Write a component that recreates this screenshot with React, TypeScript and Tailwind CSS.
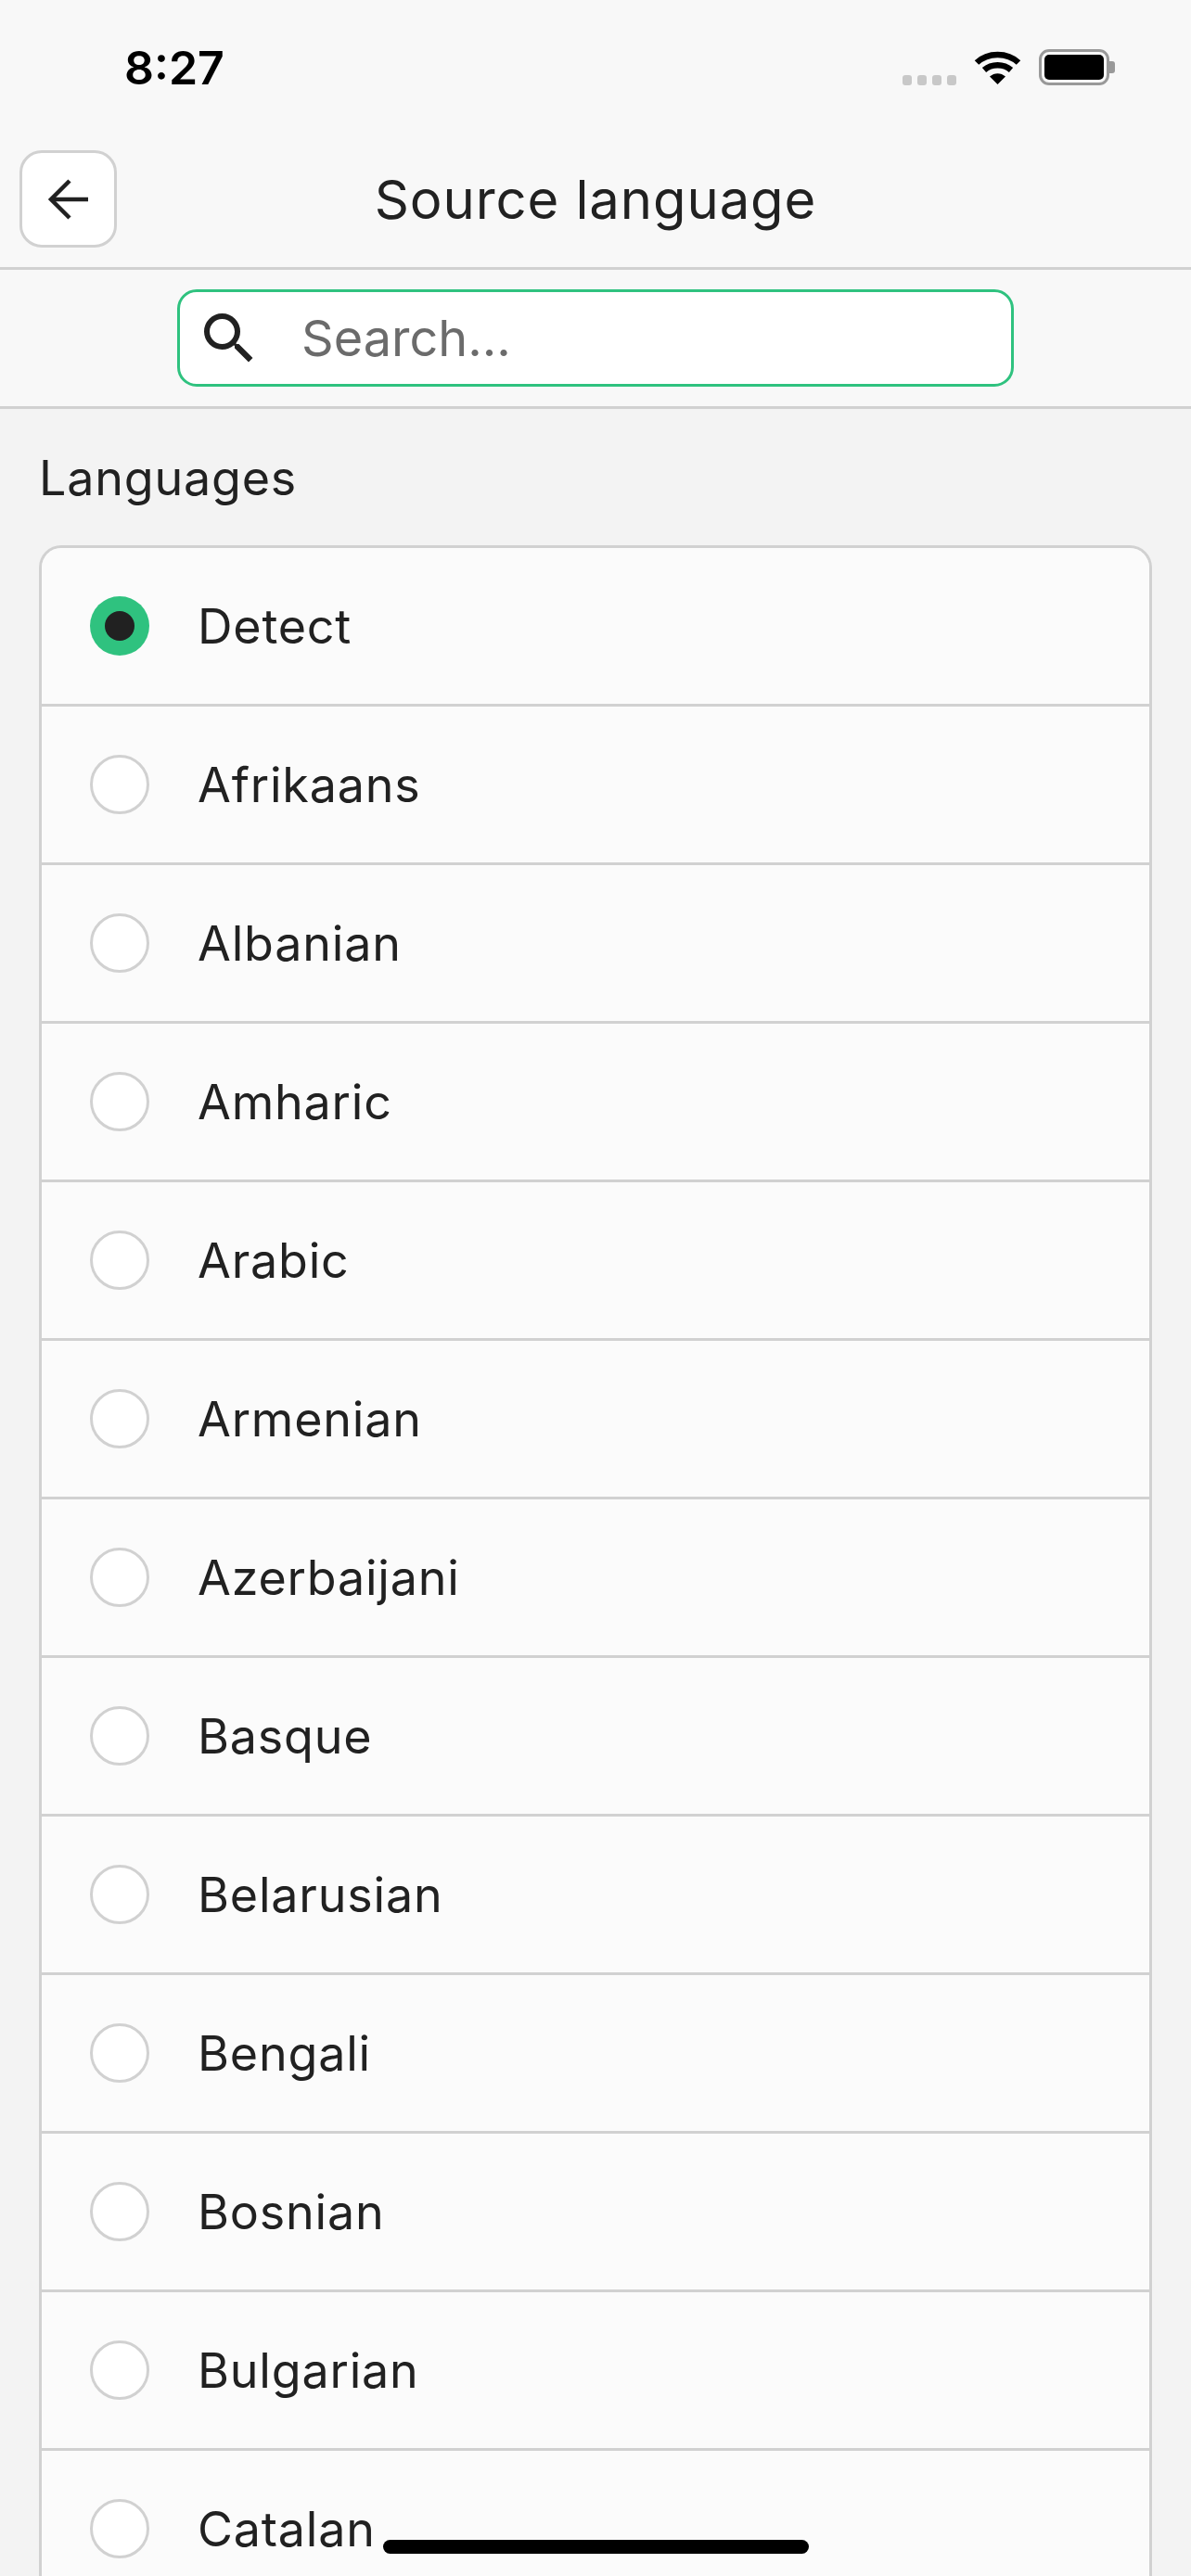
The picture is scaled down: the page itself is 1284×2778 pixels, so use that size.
import { MdSearch } from "react-icons/md";

const languages = [
  "Detect",
  "Afrikaans",
  "Albanian",
  "Amharic",
  "Arabic",
  "Armenian",
  "Azerbaijani",
  "Basque",
  "Belarusian",
  "Bengali",
  "Bosnian",
  "Bulgarian",
  "Catalan",
];

const StatusBar = () => (
  <div className="h-[162px] flex justify-between items-start shrink-0">
    <div className="pl-[134px] pt-[43px] text-[50px] leading-[60px] font-semibold text-black">8:27</div>
    <div className="flex items-start pt-[53px] pr-[82px]">
      <div className="flex gap-[6px] mt-[28px] mr-[19px]">
        <div className="w-[10px] h-[11px] rounded-[3px] bg-[#c8c8c8]"></div>
        <div className="w-[10px] h-[11px] rounded-[3px] bg-[#c8c8c8]"></div>
        <div className="w-[10px] h-[11px] rounded-[3px] bg-[#c8c8c8]"></div>
        <div className="w-[10px] h-[11px] rounded-[3px] bg-[#c8c8c8]"></div>
      </div>
      <svg width="51" height="38" viewBox="0 0 51 38" className="mr-[19px]">
        <path d="M3 14.5C15 3 36 3 48 14.5" fill="none" stroke="#000" strokeWidth="6.5" />
        <path d="M11 22.5C19 15.5 32 15.5 40 22.5" fill="none" stroke="#000" strokeWidth="6.5" />
        <path d="M17 29.5C22 25 29 25 34 29.5L25.5 38Z" fill="#000" />
      </svg>
      <div className="w-[76px] h-[39px] rounded-[11px] border-[3px] border-[#999999] p-[3px]">
        <div className="w-full h-full rounded-[5px] bg-black"></div>
      </div>
      <div className="w-[6px] h-[13px] mt-[13px] rounded-r-[3px] bg-[#999999]"></div>
    </div>
  </div>
);

const Header = () => (
  <div className="h-[129px] grid grid-cols-[1fr_auto_1fr] items-start border-b-[3px] border-[#d1d1d1] shrink-0">
    <div className="pl-[21px]">
      <button className="w-[105px] h-[105px] flex items-center justify-center bg-white rounded-[24px] border-[3px] border-[#d1d1d1]">
        <svg width="44" height="44" viewBox="0 0 44 44" fill="none" stroke="#212121" strokeWidth="4.5" className="-ml-[2px]">
          <path d="M44 22H4" />
          <path d="M24 2L4 22L24 42" />
        </svg>
      </button>
    </div>
    <h1 className="text-[58px] leading-[106px] font-normal text-[#212121] tracking-[0.9px]">Source language</h1>
    <div></div>
  </div>
);

const SearchBar = () => (
  <div className="h-[150px] flex justify-center pt-[21px] border-b-[3px] border-[#d1d1d1] shrink-0">
    <div className="w-[902px] h-[105px] flex items-center bg-white rounded-[21px] border-[3px] border-[#2fc27f] pl-[17px]">
      <MdSearch className="text-[#212121] shrink-0" size={72} />
      <span className="ml-[42px] text-[54px] font-normal text-[#6b6b6b]">Search...</span>
    </div>
  </div>
);

const LanguageRow = ({ name, selected }: { name: string; selected: boolean }) => (
  <div className="h-[171px] shrink-0 flex items-center pl-[52px] border-b-[3px] border-[#d1d1d1] bg-[#fbfbfb]">
    {selected ? (
      <div className="w-[64px] h-[64px] rounded-full bg-[#2fc27f] flex items-center justify-center">
        <div className="w-[32px] h-[32px] rounded-full bg-[#212121]"></div>
      </div>
    ) : (
      <div className="w-[64px] h-[64px] rounded-full bg-white border-[3px] border-[#d1d1d1]"></div>
    )}
    <span className="ml-[52px] pt-[2px] text-[52px] font-normal text-[#212121] tracking-[0.8px]">{name}</span>
  </div>
);

const App = () => {
  return (
    <div className="relative w-[1284px] h-[2778px] overflow-hidden flex flex-col bg-[#f8f8f8] font-['Inter',sans-serif]">
      <StatusBar />
      <Header />
      <SearchBar />
      <div className="flex-1 bg-[#f3f3f3] px-[42px] overflow-hidden">
        <div className="pt-[44px] h-[147px] text-[52px] leading-[62px] font-normal text-[#212121] tracking-[0.8px]">Languages</div>
        <div className="w-[1200px] rounded-t-[24px] border-[3px] border-b-0 border-[#d1d1d1] overflow-hidden flex flex-col">
          {languages.map((name) => (
            <LanguageRow key={name} name={name} selected={name === "Detect"} />
          ))}
        </div>
      </div>
      <div className="absolute left-[413px] bottom-[24px] w-[459px] h-[15px] rounded-full bg-black"></div>
    </div>
  );
};

export default App;
